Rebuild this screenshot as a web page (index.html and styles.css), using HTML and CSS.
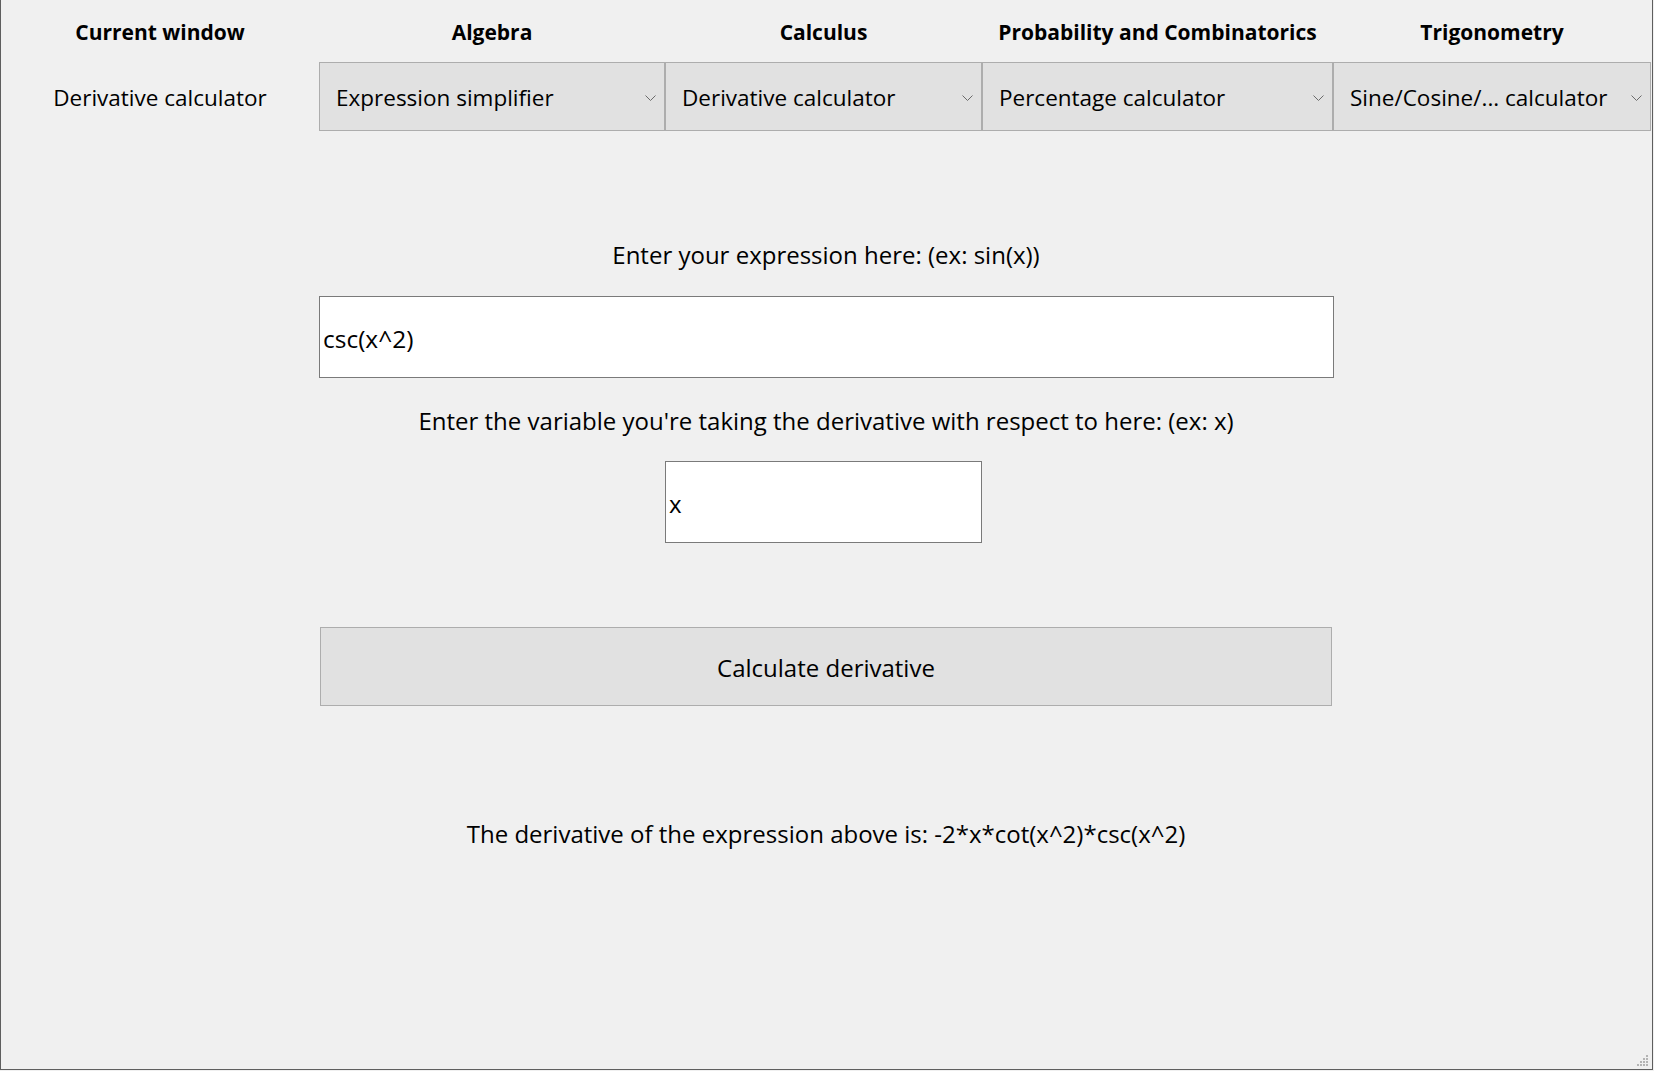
FILE: index.html
```html
<!DOCTYPE html>
<html>
<head>
<meta charset="utf-8">
<link rel="stylesheet" href="styles.css">
</head>
<body>
<div class="window">
  <div class="grid">
    <div class="head c0">Current window</div>
    <div class="head c1">Algebra</div>
    <div class="head c2">Calculus</div>
    <div class="head c3">Probability and Combinatorics</div>
    <div class="head c4">Trigonometry</div>

    <div class="current c0">Derivative calculator</div>
    <div class="combo c1"><span>Expression simplifier</span><svg class="chev" width="11" height="6" viewBox="0 0 11 6"><polyline points="0.5,0.5 5.5,5.5 10.5,0.5" fill="none" stroke="#6a6a6a" stroke-width="1"/></svg></div>
    <div class="combo c2"><span>Derivative calculator</span><svg class="chev" width="11" height="6" viewBox="0 0 11 6"><polyline points="0.5,0.5 5.5,5.5 10.5,0.5" fill="none" stroke="#6a6a6a" stroke-width="1"/></svg></div>
    <div class="combo c3"><span>Percentage calculator</span><svg class="chev" width="11" height="6" viewBox="0 0 11 6"><polyline points="0.5,0.5 5.5,5.5 10.5,0.5" fill="none" stroke="#6a6a6a" stroke-width="1"/></svg></div>
    <div class="combo c4 last"><span>Sine/Cosine/... calculator</span><svg class="chev" width="11" height="6" viewBox="0 0 11 6"><polyline points="0.5,0.5 5.5,5.5 10.5,0.5" fill="none" stroke="#6a6a6a" stroke-width="1"/></svg></div>

    <div class="label label1 span3">Enter your expression here: (ex: sin(x))</div>
    <div class="field field1 span3">csc(x^2)</div>
    <div class="label label2 span3">Enter the variable you're taking the derivative with respect to here: (ex: x)</div>
    <div class="field field2 c2">x</div>
    <div class="button span3">Calculate derivative</div>
    <div class="label result span3">The derivative of the expression above is: -2*x*cot(x^2)*csc(x^2)</div>
  </div>
  <div class="grip">
    <svg width="12" height="12" viewBox="0 0 12 12" fill="#b4b4b4">
      <rect x="9" y="0" width="2" height="2"/>
      <rect x="6" y="3" width="2" height="2"/><rect x="9" y="3" width="2" height="2"/>
      <rect x="3" y="6" width="2" height="2"/><rect x="6" y="6" width="2" height="2"/><rect x="9" y="6" width="2" height="2"/>
      <rect x="0" y="9" width="2" height="2"/><rect x="3" y="9" width="2" height="2"/><rect x="6" y="9" width="2" height="2"/><rect x="9" y="9" width="2" height="2"/>
    </svg>
  </div>
</div>
</body>
</html>
```

FILE: styles.css
```css
html, body {
  margin: 0;
  padding: 0;
  background: #f0f0f0;
}
body {
  font-family: "Open Sans", "Noto Sans", sans-serif;
  font-size: 24px;
  color: #000;
}
.window {
  position: relative;
  box-sizing: border-box;
  width: 1653px;
  height: 1070px;
  border-left: 1px solid #5e5e5e;
  border-right: 1px solid #5e5e5e;
  border-bottom: 1px solid #5e5e5e;
  background: #f0f0f0;
  overflow: hidden;
}
.grid {
  display: grid;
  grid-template-columns: 318px 346px 317px 351px 318px;
  grid-template-rows: 62px 69px 165px 82px 83px 82px 84px 79px 1fr;
}
.c0 { grid-column: 1; }
.c1 { grid-column: 2; }
.c2 { grid-column: 3; }
.c3 { grid-column: 4; }
.c4 { grid-column: 5; }
.span3 { grid-column: 2 / 5; }

.head {
  grid-row: 1;
  font-weight: 700;
  font-size: 21px;
  display: flex;
  align-items: center;
  justify-content: center;
  padding-top: 2px;
}
.current {
  grid-row: 2;
  font-size: 22.5px;
  display: flex;
  align-items: center;
  justify-content: center;
  padding-top: 1px;
}
.combo {
  grid-row: 2;
  box-sizing: border-box;
  font-size: 22.5px;
  background: #e1e1e1;
  border: 1px solid #adadad;
  display: flex;
  align-items: center;
  justify-content: space-between;
  padding: 1px 8px 0 16px;
}
.combo span {
  white-space: nowrap;
}
.chev {
  display: block;
  margin-top: 1px;
}
.label {
  display: flex;
  justify-content: center;
  white-space: nowrap;
}
.label1 {
  grid-row: 3;
  align-items: flex-end;
  padding-bottom: 25px;
}
.field {
  box-sizing: border-box;
  background: #fff;
  border: 1px solid #7a7a7a;
  display: flex;
  align-items: center;
  padding-left: 3px;
  padding-top: 2px;
}
.field1 {
  grid-row: 4;
  margin-right: -1px;
  font-size: 24.5px;
}
.label2 {
  grid-row: 5;
  align-items: center;
  padding-top: 2px;
}
.field2 {
  grid-row: 6;
}
.button {
  grid-row: 8;
  box-sizing: border-box;
  background: #e1e1e1;
  border: 1px solid #adadad;
  display: flex;
  align-items: center;
  justify-content: center;
  margin: 0 1px;
  padding-top: 2px;
}
.result {
  grid-row: 9;
  align-items: flex-start;
  padding-top: 111px;
}
.grip {
  position: absolute;
  right: 3px;
  bottom: 2px;
  line-height: 0;
}
```
